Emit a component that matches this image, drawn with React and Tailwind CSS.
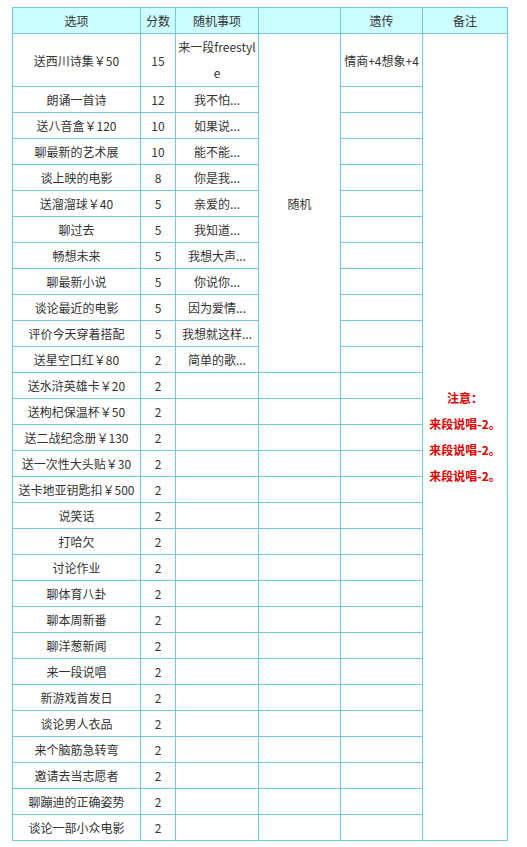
import React from 'react';

const rows = [
  ['送西川诗集￥50', '15', '来一段freestyle'],
  ['朗诵一首诗', '12', '我不怕...'],
  ['送八音盒￥120', '10', '如果说...'],
  ['聊最新的艺术展', '10', '能不能...'],
  ['谈上映的电影', '8', '你是我...'],
  ['送溜溜球￥40', '5', '亲爱的...'],
  ['聊过去', '5', '我知道...'],
  ['畅想未来', '5', '我想大声...'],
  ['聊最新小说', '5', '你说你...'],
  ['谈论最近的电影', '5', '因为爱情...'],
  ['评价今天穿着搭配', '5', '我想就这样...'],
  ['送星空口红￥80', '2', '简单的歌...'],
  ['送水浒英雄卡￥20', '2', ''],
  ['送枸杞保温杯￥50', '2', ''],
  ['送二战纪念册￥130', '2', ''],
  ['送一次性大头贴￥30', '2', ''],
  ['送卡地亚钥匙扣￥500', '2', ''],
  ['说笑话', '2', ''],
  ['打哈欠', '2', ''],
  ['讨论作业', '2', ''],
  ['聊体育八卦', '2', ''],
  ['聊本周新番', '2', ''],
  ['聊洋葱新闻', '2', ''],
  ['来一段说唱', '2', ''],
  ['新游戏首发日', '2', ''],
  ['谈论男人衣品', '2', ''],
  ['来个脑筋急转弯', '2', ''],
  ['邀请去当志愿者', '2', ''],
  ['聊蹦迪的正确姿势', '2', ''],
  ['谈论一部小众电影', '2', ''],
];

const cell = 'border border-[#72c9e8] p-0 text-center align-middle';

const App = () => {
  return (
    <div className="min-h-screen bg-white pt-[7px] pl-[12px] text-[12px] leading-[25px] text-[#333]" style={{ fontFamily: '"Noto Sans CJK SC", "Noto Sans", sans-serif' }}>
      <table className="table-fixed border-collapse w-[495px]">
        <colgroup>
          <col className="w-[128px]" />
          <col className="w-[35px]" />
          <col className="w-[83px]" />
          <col className="w-[82px]" />
          <col className="w-[82px]" />
          <col className="w-[85px]" />
        </colgroup>
        <thead>
          <tr className="bg-[#ccfdff]">
            <th className={`${cell} font-normal`}>选项</th>
            <th className={`${cell} font-normal`}>分数</th>
            <th className={`${cell} font-normal`}>随机事项</th>
            <th className={`${cell} font-normal`}></th>
            <th className={`${cell} font-normal`}>遗传</th>
            <th className={`${cell} font-normal`}>备注</th>
          </tr>
        </thead>
        <tbody>
          {rows.map((r, i) => (
            <tr key={i}>
              <td className={cell}>{r[0]}</td>
              <td className={cell}>{r[1]}</td>
              <td className={`${cell} break-all ${i === 0 ? 'leading-[26px]' : ''}`}>{r[2]}</td>
              {i === 0 && (
                <td className={cell} rowSpan={12}>随机</td>
              )}
              {i >= 12 && <td className={cell}></td>}
              <td className={`${cell} whitespace-nowrap`}>{i === 0 ? '情商+4想象+4' : ''}</td>
              {i === 0 && (
                <td className={`${cell} font-bold text-[#e00000] leading-[26px]`} rowSpan={30}>
                  <div>注意：</div>
                  <div>来段说唱-2。</div>
                  <div>来段说唱-2。</div>
                  <div>来段说唱-2。</div>
                </td>
              )}
            </tr>
          ))}
        </tbody>
      </table>
    </div>
  );
};

export default App;
